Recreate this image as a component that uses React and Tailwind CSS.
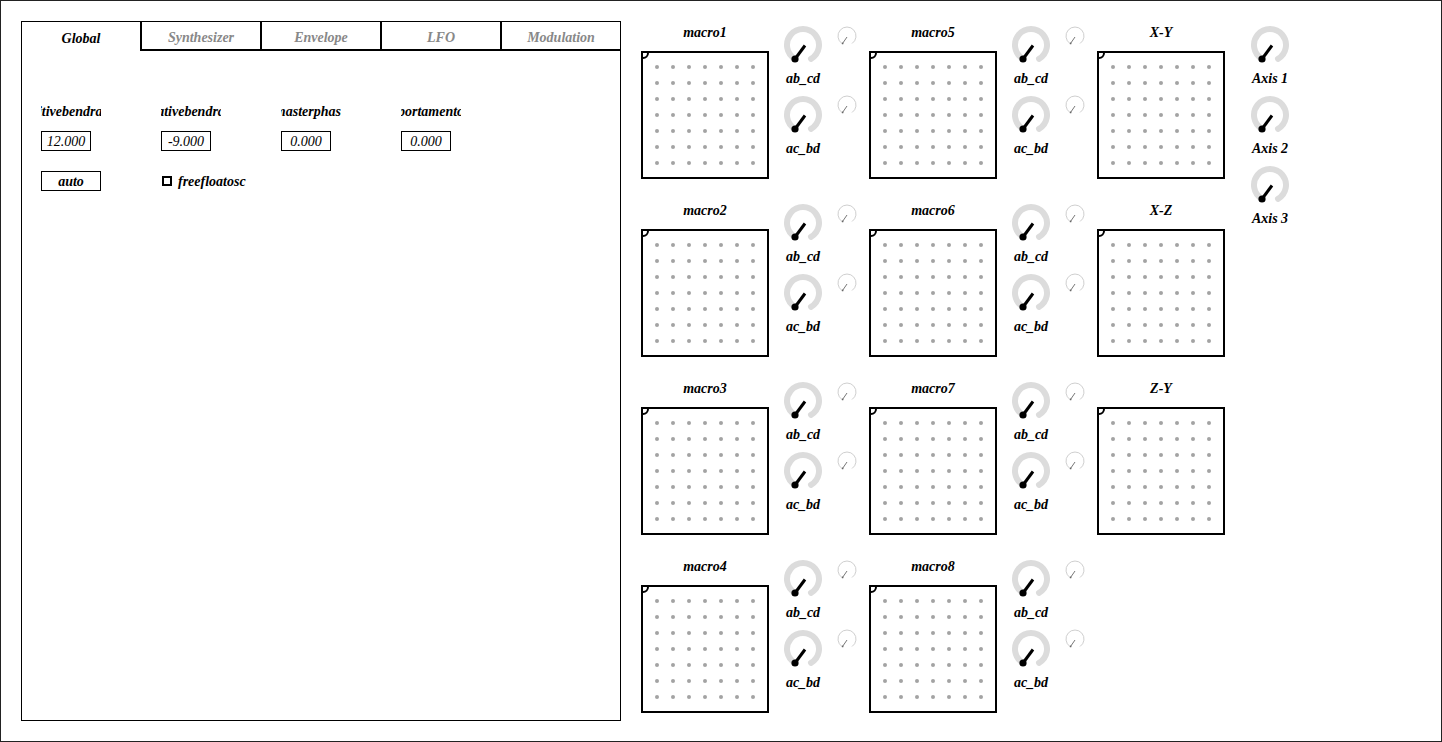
import React from 'react';

const serif = "font-['Liberation_Serif',serif]";

const tabs = ['Global', 'Synthesizer', 'Envelope', 'LFO', 'Modulation'];

const params = [
  { name: 'positivebendrange', value: '12.000' },
  { name: 'negativebendrange', value: '-9.000' },
  { name: 'masterphase', value: '0.000' },
  { name: 'portamento', value: '0.000' },
];

const Knob = () => (
  <svg width="40" height="40" viewBox="0 0 40 40">
    <path d="M12 33.86 A16 16 0 1 1 28 33.86" fill="none" stroke="#dcdcdc" strokeWidth="6" strokeLinecap="round" />
    <line x1="12" y1="34" x2="22" y2="20.5" stroke="#000" strokeWidth="3" />
    <circle cx="12" cy="34" r="3.6" fill="#000" />
  </svg>
);

const SmallKnob = () => (
  <svg width="20" height="20" viewBox="0 0 20 20">
    <path d="M5 17.5 A9 9 0 1 1 15 17.5" fill="none" stroke="#cfcfcf" strokeWidth="1" />
    <line x1="10" y1="11" x2="5.6" y2="17.4" stroke="#777" strokeWidth="1" />
    <circle cx="5.6" cy="17.4" r="0.9" fill="#666" />
  </svg>
);

const Label = ({ children, className = '' }) => (
  <div className={`h-[16px] leading-[16px] text-[14px] font-bold italic whitespace-nowrap text-black ${serif} ${className}`}>
    {children}
  </div>
);

const Pad = () => (
  <div className="relative w-[128px] h-[128px] border-2 border-black overflow-hidden">
    <div className="absolute -left-[6px] -top-[6px] w-[12px] h-[12px] rounded-full border-2 border-black" />
    <div className="grid grid-cols-[repeat(7,4px)] gap-[12px] pt-[12px] pl-[12px]">
      {Array.from({ length: 49 }).map((_, i) => (
        <div key={i} className="w-[4px] h-[4px] rounded-full bg-[#a3a3a3]" />
      ))}
    </div>
  </div>
);

const PadBlock = ({ name }) => (
  <div className="w-[128px] shrink-0 pt-[4px] flex flex-col items-center">
    <Label>{name}</Label>
    <div className="mt-[10px]">
      <Pad />
    </div>
  </div>
);

const KnobWithLabel = ({ label, className = '' }) => (
  <div className={`flex flex-col items-center ${className}`}>
    <Knob />
    <Label className="mt-[6px]">{label}</Label>
  </div>
);

const MacroUnit = ({ name }) => (
  <div className="flex w-[228px] h-[178px] shrink-0">
    <PadBlock name={name} />
    <div className="ml-[14px] w-[40px] pt-[4px] flex flex-col items-center">
      <KnobWithLabel label="ab_cd" />
      <KnobWithLabel label="ac_bd" className="mt-[8px]" />
    </div>
    <div className="ml-[14px] w-[20px] pt-[5px] flex flex-col">
      <SmallKnob />
      <div className="mt-[49px]">
        <SmallKnob />
      </div>
    </div>
  </div>
);

export default function App() {
  return (
    <div className={`w-[1442px] h-[742px] border border-[#222] p-5 flex gap-5 bg-white overflow-hidden ${serif}`}>
      {/* left panel */}
      <div className="w-[600px] h-[700px] border border-black shrink-0">
        <div className="flex h-[29px]">
          {tabs.map((t, i) => (
            <div
              key={t}
              className={
                i === 0
                  ? 'w-[118px] pt-[3px] flex items-center justify-center text-[14px] font-bold italic text-black'
                  : 'w-[120px] pt-[3px] border-l-2 border-b-2 border-black flex items-center justify-center text-[14px] font-bold italic text-[#888]'
              }
            >
              {t}
            </div>
          ))}
        </div>
        <div className="pl-[19px] pt-[53px]">
          <div className="flex">
            {params.map((p) => (
              <div key={p.name} className="w-[120px]">
                <div className="w-[60px] h-[16px] overflow-hidden">
                  <div className="w-[200px] -ml-[70px] text-center whitespace-nowrap text-[14px] leading-[16px] font-bold italic text-black">
                    {p.name}
                  </div>
                </div>
                <div className="mt-[11px] w-[50px] h-[20px] border border-black flex items-center justify-center pt-[1px] italic text-[14px] text-black">
                  {p.value}
                </div>
              </div>
            ))}
          </div>
          <div className="flex mt-[20px] h-[20px]">
            <div className="w-[120px]">
              <div className="w-[60px] h-[20px] border border-black flex items-center justify-center pt-[1px] font-bold italic text-[14px] text-black">
                auto
              </div>
            </div>
            <div className="flex items-center">
              <div className="ml-[1px] w-[10px] h-[10px] border-2 border-black" />
              <span className="ml-[6px] text-[14px] font-bold italic text-black">freefloatosc</span>
            </div>
          </div>
        </div>
      </div>

      {/* right area */}
      <div className="flex items-start">
        <div className="flex flex-col shrink-0">
          {['macro1', 'macro2', 'macro3', 'macro4'].map((m) => (
            <MacroUnit key={m} name={m} />
          ))}
        </div>
        <div className="flex flex-col shrink-0">
          {['macro5', 'macro6', 'macro7', 'macro8'].map((m) => (
            <MacroUnit key={m} name={m} />
          ))}
        </div>
        <div className="flex flex-col shrink-0">
          {['X-Y', 'X-Z', 'Z-Y'].map((m) => (
            <div key={m} className="h-[178px] shrink-0">
              <PadBlock name={m} />
            </div>
          ))}
        </div>
        <div className="ml-[25px] w-[40px] pt-[4px] flex flex-col items-center shrink-0">
          <KnobWithLabel label="Axis 1" />
          <KnobWithLabel label="Axis 2" className="mt-[8px]" />
          <KnobWithLabel label="Axis 3" className="mt-[8px]" />
        </div>
      </div>
    </div>
  );
}
